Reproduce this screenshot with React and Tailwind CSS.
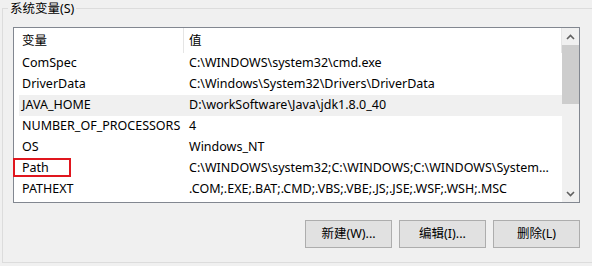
import React from "react";

const rows = [
  ["ComSpec", "C:\\WINDOWS\\system32\\cmd.exe"],
  ["DriverData", "C:\\Windows\\System32\\Drivers\\DriverData"],
  ["JAVA_HOME", "D:\\workSoftware\\Java\\jdk1.8.0_40"],
  ["NUMBER_OF_PROCESSORS", "4"],
  ["OS", "Windows_NT"],
  ["Path", "C:\\WINDOWS\\system32;C:\\WINDOWS;C:\\WINDOWS\\System..."],
  ["PATHEXT", ".COM;.EXE;.BAT;.CMD;.VBS;.VBE;.JS;.JSE;.WSF;.WSH;.MSC"],
];

function Chevron({ up }) {
  return (
    <svg width="9" height="6" viewBox="0 0 9 6" className="block">
      <polyline
        points={up ? "1,5 4.5,1.5 8,5" : "1,1 4.5,4.5 8,1"}
        fill="none"
        stroke="#606060"
        strokeWidth="1.6"
      />
    </svg>
  );
}

export default function App() {
  return (
    <div
      className="relative w-[592px] h-[266px] overflow-hidden bg-[#f0f0f0] text-[12.5px] text-black"
      style={{ fontFamily: '"Noto Sans", "Noto Sans CJK SC", sans-serif' }}
    >
      <div className="ml-[2px] mt-[8px] w-[600px] h-[255px] border border-[#dcdcdc] relative pl-[10px] pt-[18px]">
        <div className="absolute left-[5px] top-[-9px] px-[2px] bg-[#f0f0f0] leading-[18px]">
          系统变量(S)
        </div>
        <div className="relative w-[567px] h-[176px] border border-[#828790] bg-white flex">
          <div className="flex-1 flex flex-col">
            <div className="h-[25px] flex items-center relative">
              <div className="w-[169px] pl-[8px] leading-none pt-[1px]">变量</div>
              <div className="w-px h-full bg-[#e5e5e5]"></div>
              <div className="pl-[5px] leading-none pt-[1px]">值</div>
              <div className="absolute right-0 top-0 w-px h-full bg-[#e5e5e5]"></div>
            </div>
            {rows.map(([k, v], i) => (
              <div
                key={k}
                className={
                  "ml-[5px] h-[21px] flex items-center whitespace-nowrap " +
                  (i === 2 ? "bg-[#f0f0f0]" : "")
                }
              >
                <div className="w-[170px] pl-[3px]">{k}</div>
                <div>{v}</div>
              </div>
            ))}
          </div>
          <div className="w-[17px] h-full bg-[#f0f0f0] flex flex-col">
            <div className="h-[17px] flex items-center justify-center">
              <Chevron up />
            </div>
            <div className="h-[59px] bg-[#cdcdcd]"></div>
            <div className="flex-1"></div>
            <div className="h-[17px] flex items-center justify-center">
              <Chevron />
            </div>
          </div>
          <div className="absolute left-[-1px] top-[130px] w-[58px] h-[19px] border-2 border-[#e0161e]"></div>
        </div>
        <div className="mt-[17px] w-[567px] flex justify-end gap-[7px]">
          {["新建(W)...", "编辑(I)...", "删除(L)"].map((t) => (
            <div
              key={t}
              className="w-[87px] h-[28px] border border-[#adadad] bg-[#e1e1e1] flex items-center justify-center"
            >
              {t}
            </div>
          ))}
        </div>
      </div>
    </div>
  );
}
